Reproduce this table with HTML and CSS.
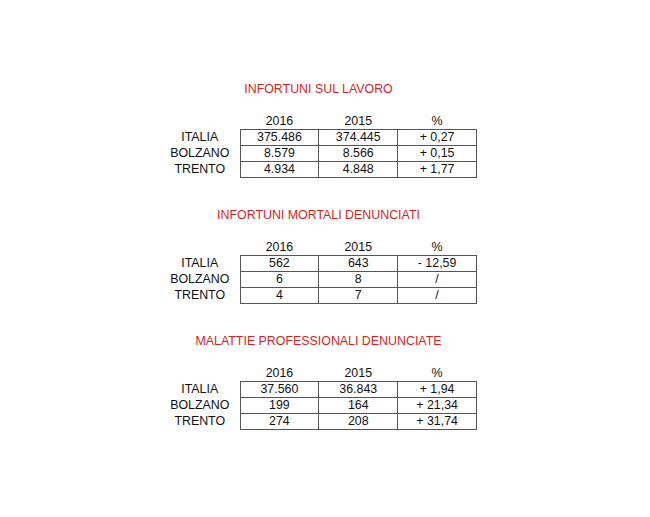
FILE: index.html
```html
<!DOCTYPE html>
<html lang="it">
<head>
<meta charset="utf-8">
<link rel="stylesheet" href="styles.css">
</head>
<body>
<main class="page">
  <section class="block">
    <h2 class="title">INFORTUNI SUL LAVORO</h2>
    <table class="data">
      <thead><tr><th></th><th>2016</th><th>2015</th><th>%</th></tr></thead>
      <tbody>
        <tr><th>ITALIA</th><td>375.486</td><td>374.445</td><td>+ 0,27</td></tr>
        <tr><th>BOLZANO</th><td>8.579</td><td>8.566</td><td>+ 0,15</td></tr>
        <tr><th>TRENTO</th><td>4.934</td><td>4.848</td><td>+ 1,77</td></tr>
      </tbody>
    </table>
  </section>
  <section class="block">
    <h2 class="title">INFORTUNI MORTALI DENUNCIATI</h2>
    <table class="data">
      <thead><tr><th></th><th>2016</th><th>2015</th><th>%</th></tr></thead>
      <tbody>
        <tr><th>ITALIA</th><td>562</td><td>643</td><td>- 12,59</td></tr>
        <tr><th>BOLZANO</th><td>6</td><td>8</td><td>/</td></tr>
        <tr><th>TRENTO</th><td>4</td><td>7</td><td>/</td></tr>
      </tbody>
    </table>
  </section>
  <section class="block">
    <h2 class="title">MALATTIE PROFESSIONALI DENUNCIATE</h2>
    <table class="data">
      <thead><tr><th></th><th>2016</th><th>2015</th><th>%</th></tr></thead>
      <tbody>
        <tr><th>ITALIA</th><td>37.560</td><td>36.843</td><td>+ 1,94</td></tr>
        <tr><th>BOLZANO</th><td>199</td><td>164</td><td>+ 21,34</td></tr>
        <tr><th>TRENTO</th><td>274</td><td>208</td><td>+ 31,74</td></tr>
      </tbody>
    </table>
  </section>
</main>
</body>
</html>
```

FILE: styles.css
```css
html, body {
  margin: 0;
  padding: 0;
  background: #ffffff;
}
body {
  font-family: "Liberation Sans", Arial, sans-serif;
  color: #111111;
  font-size: 12.4px;
}
.page {
  width: 650px;
  height: 517px;
  padding-top: 81px;
  box-sizing: border-box;
}
.block {
  width: 317px;
  margin-left: 160px;
  margin-bottom: 29px;
}
.title {
  margin: 0 0 16px 0;
  font-size: 12.4px;
  font-weight: normal;
  line-height: 16px;
  color: #d71f1f;
  text-align: center;
}
.data {
  border-collapse: collapse;
  table-layout: fixed;
  width: 317px;
}
.data th, .data td {
  font-weight: normal;
  text-align: center;
  padding: 0;
  height: 15px;
  line-height: 15px;
  font-size: 12.4px;
}
.data th:first-child { width: 80px; }
.data thead th { height: 16px; line-height: 16px; }
.data tbody td {
  border: 1px solid #555555;
}
```
